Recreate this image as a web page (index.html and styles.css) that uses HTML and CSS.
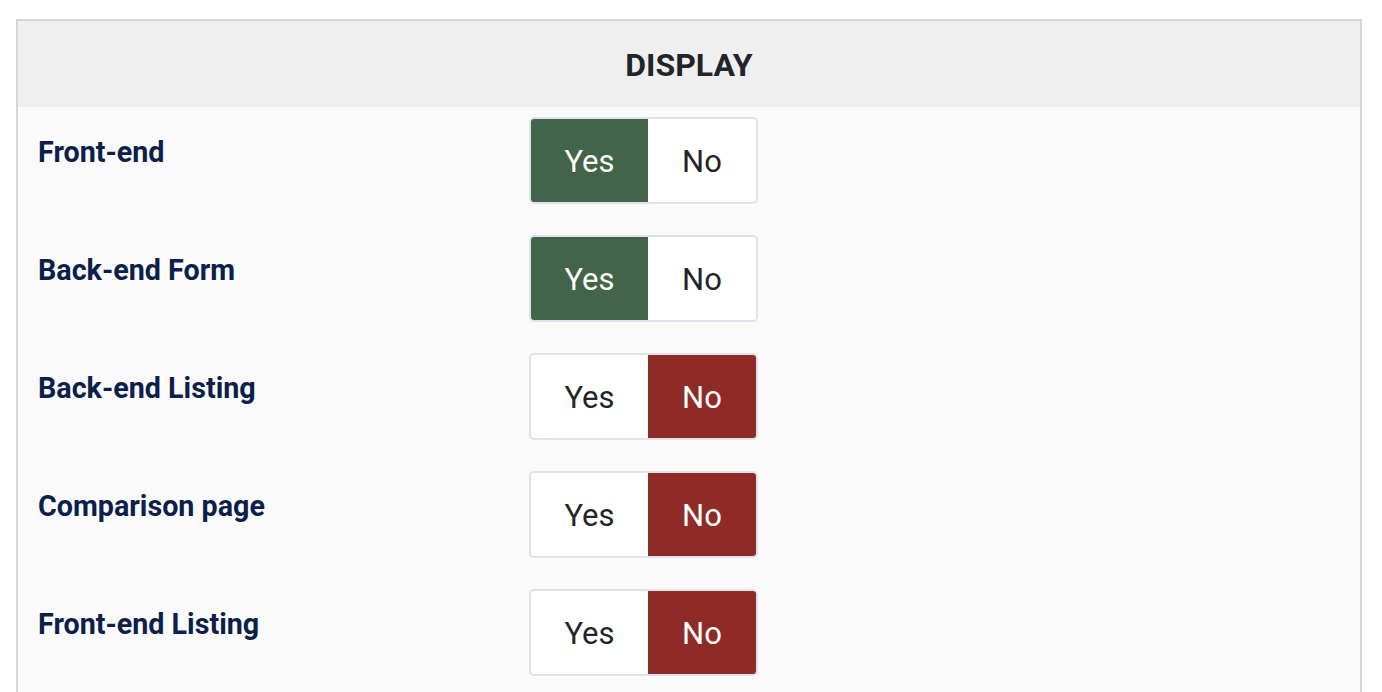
FILE: index.html
```html
<!DOCTYPE html>
<html>
<head>
<meta charset="utf-8">
<link rel="stylesheet" href="styles.css">
</head>
<body>
<div class="panel">
  <div class="panel-head">DISPLAY</div>
  <div class="panel-body">
    <div class="row">
      <div class="label">Front-end</div>
      <div class="toggle"><span class="seg yes on-yes">Yes</span><span class="seg no">No</span></div>
    </div>
    <div class="row">
      <div class="label">Back-end Form</div>
      <div class="toggle"><span class="seg yes on-yes">Yes</span><span class="seg no">No</span></div>
    </div>
    <div class="row">
      <div class="label">Back-end Listing</div>
      <div class="toggle"><span class="seg yes">Yes</span><span class="seg no on-no">No</span></div>
    </div>
    <div class="row">
      <div class="label">Comparison page</div>
      <div class="toggle"><span class="seg yes">Yes</span><span class="seg no on-no">No</span></div>
    </div>
    <div class="row">
      <div class="label">Front-end Listing</div>
      <div class="toggle"><span class="seg yes">Yes</span><span class="seg no on-no">No</span></div>
    </div>
  </div>
</div>
</body>
</html>
```

FILE: styles.css
```css
html, body {
  margin: 0;
  padding: 0;
  background: #ffffff;
  overflow: hidden;
}
body {
  padding: 19px 20px 0 16px;
  font-family: Roboto, "Liberation Sans", sans-serif;
}
.panel {
  border: 2px solid #d6d6d6;
  background: #fafafa;
}
.panel-head {
  height: 86px;
  background: #efefef;
  display: flex;
  align-items: center;
  justify-content: center;
  font-size: 32px;
  font-weight: 700;
  color: #212529;
  padding-top: 1px;
  box-sizing: border-box;
}
.panel-body {
  padding: 10px 0 40px 0;
  display: flex;
  flex-direction: column;
  gap: 31px;
}
.row {
  display: grid;
  grid-template-columns: 511px auto;
  align-items: start;
}
.label {
  padding: 19px 0 0 20px;
  font-size: 28.7px;
  font-weight: 700;
  color: #0c1f4b;
  line-height: 33px;
}
.toggle {
  display: flex;
  width: 229px;
  height: 87px;
  box-sizing: border-box;
  border: 2px solid #dfe3e7;
  border-radius: 5px;
  overflow: hidden;
  background: #ffffff;
}
.seg {
  display: flex;
  align-items: center;
  justify-content: center;
  font-size: 31px;
  color: #212529;
  height: 100%;
  padding-top: 1px;
  box-sizing: border-box;
}
.yes { width: 117px; }
.no { width: 108px; }
.on-yes {
  background: #426448;
  color: #ffffff;
}
.on-no {
  background: #8f2b27;
  color: #ffffff;
}
```
